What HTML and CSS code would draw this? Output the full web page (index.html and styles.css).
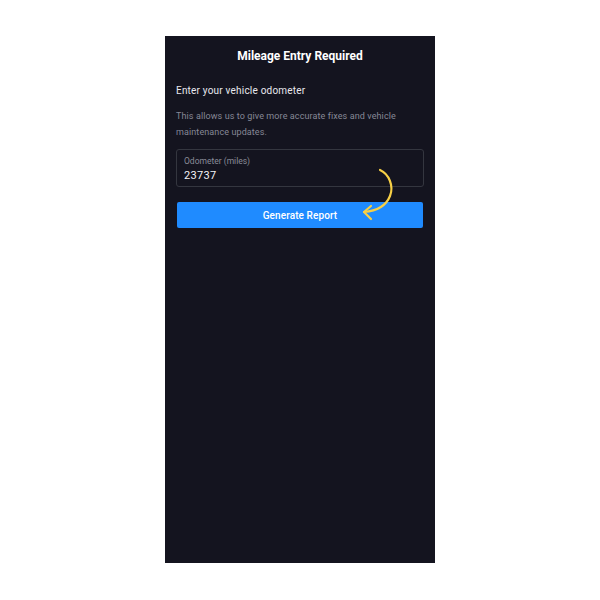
FILE: index.html
```html
<!DOCTYPE html>
<html>
<head>
<meta charset="utf-8">
<link rel="stylesheet" href="styles.css">
</head>
<body>
<div class="stage">
  <div class="panel">
    <h1 class="title">Mileage Entry Required</h1>
    <p class="heading">Enter your vehicle odometer</p>
    <p class="desc">This allows us to give more accurate fixes and vehicle maintenance updates.</p>
    <div class="form">
      <div class="field">
        <span class="label">Odometer (miles)</span>
        <span class="value">23737</span>
      </div>
      <button class="btn">Generate Report</button>
      <svg class="arrow" width="50" height="60" viewBox="0 0 50 60">
        <path d="M24 6 C33 10, 38 22, 34 32 C30 42, 20 47, 8 48" fill="none" stroke="#f7d046" stroke-width="2.2" stroke-linecap="round"/>
        <path d="M15 42 L8 48 L15 55" fill="none" stroke="#f7d046" stroke-width="2.2" stroke-linecap="round" stroke-linejoin="round"/>
      </svg>
    </div>
  </div>
</div>
</body>
</html>
```
FILE: styles.css
```css
html, body {
  margin: 0;
  padding: 0;
  background: #ffffff;
}
body {
  width: 600px;
  height: 600px;
  font-family: Roboto, "Liberation Sans", sans-serif;
}
.stage {
  display: flex;
  justify-content: center;
  padding-top: 36px;
}
.panel {
  width: 248px;
  height: 527px;
  padding: 0 11px;
  background: #14141f;
  box-sizing: content-box;
  display: flex;
  flex-direction: column;
}
.title {
  margin: 12px 0 0;
  font-size: 12px;
  font-weight: 700;
  color: #ffffff;
  text-align: center;
  line-height: 16px;
}
.heading {
  margin: 20px 0 0;
  font-size: 10px;
  letter-spacing: 0.2px;
  color: #e8e8ee;
  line-height: 14px;
}
.desc {
  margin: 10px 0 0;
  font-size: 9px;
  letter-spacing: 0.1px;
  color: #868896;
  line-height: 16px;
}
.form {
  position: relative;
  margin-top: 9px;
  display: flex;
  flex-direction: column;
}
.field {
  height: 38px;
  border: 1px solid #34363f;
  border-radius: 3px;
  box-sizing: border-box;
  padding: 6px 7px 0;
  display: flex;
  flex-direction: column;
}
.label {
  font-size: 8.5px;
  color: #8a8c98;
  line-height: 11px;
}
.value {
  font-size: 11px;
  letter-spacing: 0.3px;
  color: #f2f2f6;
  line-height: 18px;
}
.btn {
  margin-top: 15px;
  margin-right: 1px;
  margin-left: 1px;
  height: 26px;
  border: none;
  border-radius: 2px;
  background: #1f8bff;
  color: #ffffff;
  font-family: Roboto, "Liberation Sans", sans-serif;
  font-size: 10px;
  letter-spacing: 0.1px;
  font-weight: 500;
  padding: 0;
}
.arrow {
  position: absolute;
  left: 180px;
  top: 15px;
}
```
